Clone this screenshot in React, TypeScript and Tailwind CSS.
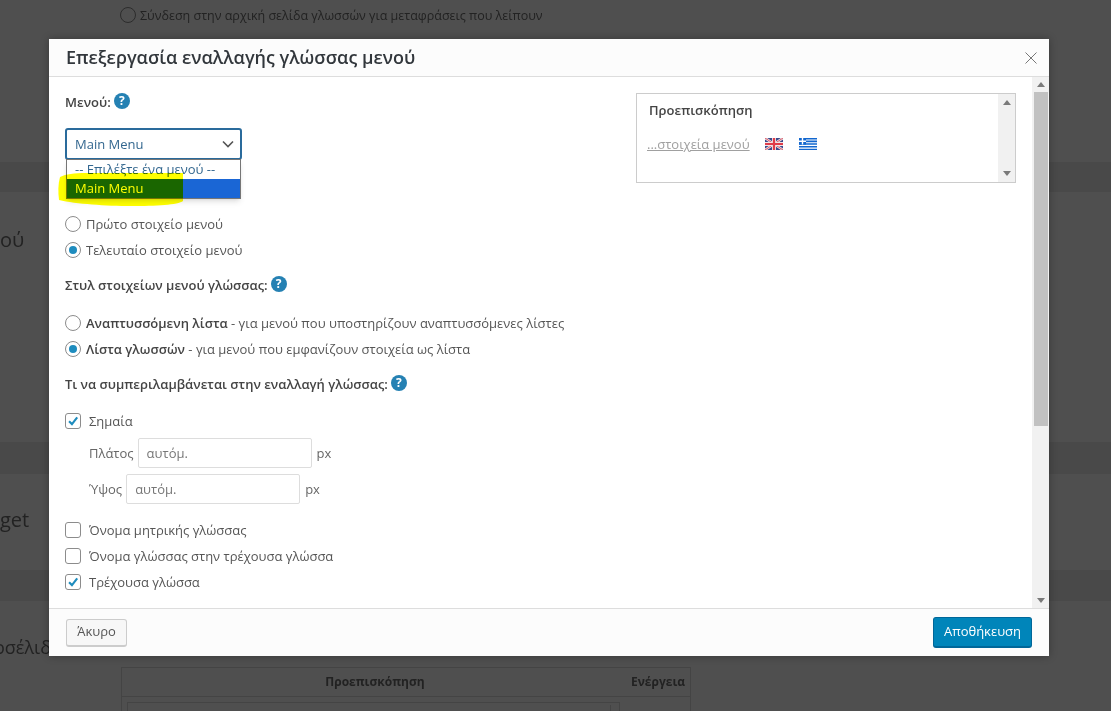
import React from "react";

const sans = { fontFamily: '"Open Sans", "Noto Sans", sans-serif' };

const HelpIcon = () => (
  <span className="inline-flex h-4 w-4 -translate-y-[2px] items-center justify-center rounded-full bg-[#2581b3] text-[12px] font-bold leading-none text-white">?</span>
);

const Radio = ({ checked }: { checked?: boolean }) => (
  <span className="flex h-4 w-4 shrink-0 items-center justify-center rounded-full border border-[#8c8c8c] bg-white">
    {checked && <span className="h-2 w-2 rounded-full bg-[#1e8cbe]" />}
  </span>
);

const Check = ({ checked }: { checked?: boolean }) => (
  <span className="flex h-4 w-4 shrink-0 items-center justify-center rounded-[3px] border border-[#8c8c8c] bg-white">
    {checked && (
      <svg viewBox="0 0 16 16" className="h-3.5 w-3.5">
        <path d="M3.5 8.2 L6.8 11.5 L12.8 3.8" fill="none" stroke="#1e8cbe" strokeWidth="2.4" />
      </svg>
    )}
  </span>
);

const RadioRow = ({ checked, children }: { checked?: boolean; children: React.ReactNode }) => (
  <div className="flex h-[26px] items-center gap-[5px] text-[13px] text-[#555]">
    <Radio checked={checked} />
    <span className="translate-y-px">{children}</span>
  </div>
);

const CheckRow = ({ checked, children }: { checked?: boolean; children: React.ReactNode }) => (
  <div className="flex h-[26px] items-center gap-[8px] text-[13px] text-[#555]">
    <Check checked={checked} />
    <span className="translate-y-px">{children}</span>
  </div>
);

const Heading = ({ children }: { children: React.ReactNode }) => (
  <div className="flex h-5 translate-y-px items-center gap-[3px] text-[13px] font-semibold text-[#444]">
    <span>{children}</span>
    <HelpIcon />
  </div>
);

const SizeRow = ({ label }: { label: string }) => (
  <div className="flex h-[30px] items-center gap-[4px] pl-[24px] text-[13px] text-[#666]">
    <span className="translate-y-px">{label}</span>
    <span className="flex h-[30px] w-[174px] items-center rounded-[2px] border border-[#ddd] bg-white px-2 pt-[1px] text-[#777]">αυτόμ.</span>
    <span className="ml-[1px] translate-y-px">px</span>
  </div>
);

const UkFlag = () => (
  <svg viewBox="0 0 18 12" className="h-3 w-[18px]">
    <rect width="18" height="12" fill="#3b4a8c" />
    <path d="M0 0 L18 12 M18 0 L0 12" stroke="#f0e4e6" strokeWidth="2.4" />
    <path d="M0 0 L18 12 M18 0 L0 12" stroke="#d9485a" strokeWidth="0.9" />
    <path d="M9 0 V12 M0 6 H18" stroke="#f0e4e6" strokeWidth="4" />
    <path d="M9 0 V12 M0 6 H18" stroke="#e03c4a" strokeWidth="2.2" />
  </svg>
);

const GreekFlag = () => (
  <svg viewBox="0 0 18 12" className="h-3 w-[18px]">
    <rect width="18" height="12" fill="#1267cf" />
    <path d="M0 2 H18 M0 4.7 H18 M0 7.4 H18 M0 10.1 H18" stroke="#fff" strokeWidth="1.1" />
    <rect width="7" height="6.6" fill="#1267cf" />
    <path d="M3.5 0 V6.6 M0 3.3 H7" stroke="#fff" strokeWidth="1.4" />
  </svg>
);

const Arrow = ({ up }: { up?: boolean }) => (
  <svg viewBox="0 0 8 5" className="h-[5px] w-2">
    <path d={up ? "M0 5 L4 0 L8 5 Z" : "M0 0 L4 5 L8 0 Z"} fill="#7a7a7a" />
  </svg>
);

export default function App() {
  return (
    <div className="relative h-[711px] w-[1111px] overflow-hidden bg-[#4f4f4f] text-[#232323]" style={sans}>
      {/* page dimmed behind the dialog */}
      <div className="flex h-full flex-col">
        <div className="flex h-[162px] items-start gap-[4px] pl-[120px] pt-[7px] text-[12.5px] text-[#222]">
          <span className="h-4 w-4 rounded-full border border-[#2c2c2c]" />
          <span>Σύνδεση στην αρχική σελίδα γλωσσών για μεταφράσεις που λείπουν</span>
        </div>
        <div className="h-[30px] bg-[#494949]" />
        <div className="h-[250px] pt-[35px] text-[20px] leading-[26px] text-[#222]">ού</div>
        <div className="h-[32px] bg-[#494949]" />
        <div className="h-[96px] pt-[33px] text-[20px] leading-[26px] text-[#222]">get</div>
        <div className="h-[31px] bg-[#494949]" />
        <div className="h-[66px] pt-[33px] text-[18px] leading-[26px] text-[#222]">
          <span className="-ml-[6px] block">οσέλιδ</span>
        </div>
        <div className="ml-[121px] flex h-[44px] w-[570px] flex-col border border-[#444] border-b-0 text-[12px] font-bold text-[#222]">
          <div className="flex h-[29px] shrink-0 items-center border-b border-[#444]">
            <div className="flex flex-1 items-center justify-center">Προεπισκόπηση</div>
            <div className="w-[62px] pl-[3px]">Ενέργεια</div>
          </div>
          <div className="ml-[5px] mt-[5px] flex h-[20px] w-[493px] justify-end border border-b-0 border-[#444] pr-[8px] pt-[2px]">
            <span className="h-[10px] w-[1px] bg-[#444]" />
          </div>
        </div>
      </div>

      {/* dialog */}
      <div className="absolute left-[49px] top-[39px] flex h-[617px] w-[1000px] flex-col bg-white shadow-[0_0_8px_rgba(0,0,0,0.3)]">
        <div className="flex h-[38px] shrink-0 items-center justify-between border-b border-[#ddd] bg-[#fcfcfc] pl-[17px] pr-[12px]">
          <span className="text-[18px] font-semibold text-[#32373c]">Επεξεργασία εναλλαγής γλώσσας μενού</span>
          <svg viewBox="0 0 12 12" className="h-3 w-3">
            <path d="M0.5 0.5 L11.5 11.5 M11.5 0.5 L0.5 11.5" stroke="#777" strokeWidth="1" fill="none" />
          </svg>
        </div>

        <div className="flex min-h-0 flex-1">
          <div className="relative flex flex-1 justify-between pl-[16px] pr-[16px]">
            <div className="flex flex-col pt-[15px]">
              <Heading>Μενού:</Heading>
              <div className="relative mt-[16px] h-[32px] w-[177px]">
                <div className="flex h-[32px] items-center justify-between rounded-[3px] border-2 border-[#2a6b9c] pl-[8px] pr-[6px] text-[13px] text-[#33678f]">
                  <span className="translate-y-px">Main Menu</span>
                  <svg viewBox="0 0 12 8" className="h-2 w-3">
                    <path d="M1 1.5 L6 6.5 L11 1.5" fill="none" stroke="#555" strokeWidth="1.6" />
                  </svg>
                </div>
                {/* open list */}
                <div className="absolute left-[1px] top-[31px] z-10 w-[175px] border border-[#767676] bg-white text-[13px] leading-[19px] shadow-md">
                  <div className="h-[19px] pl-[8px] text-[#33678f]">-- Επιλέξτε ένα μενού --</div>
                  <div className="h-[19px] bg-[#1a66d5] pl-[8px] text-white">Main Menu</div>
                </div>
              </div>
              <div className="mt-[51px] flex flex-col">
                <RadioRow>Πρώτο στοιχείο μενού</RadioRow>
                <RadioRow checked>Τελευταίο στοιχείο μενού</RadioRow>
              </div>
              <div className="mt-[12px]">
                <Heading>Στυλ στοιχείων μενού γλώσσας:</Heading>
              </div>
              <div className="mt-[15px] flex flex-col">
                <RadioRow><b className="font-semibold text-[#444]">Αναπτυσσόμενη λίστα</b> - για μενού που υποστηρίζουν αναπτυσσόμενες λίστες</RadioRow>
                <RadioRow checked><b className="font-semibold text-[#444]">Λίστα γλωσσών</b> - για μενού που εμφανίζουν στοιχεία ως λίστα</RadioRow>
              </div>
              <div className="mt-[12px]">
                <Heading>Τι να συμπεριλαμβάνεται στην εναλλαγή γλώσσας:</Heading>
              </div>
              <div className="mt-[14px]">
                <CheckRow checked>Σημαία</CheckRow>
              </div>
              <div className="mt-[4px] flex flex-col gap-[6px]">
                <SizeRow label="Πλάτος" />
                <SizeRow label="Ύψος" />
              </div>
              <div className="mt-[13px] flex flex-col">
                <CheckRow>Όνομα μητρικής γλώσσας</CheckRow>
                <CheckRow>Όνομα γλώσσας στην τρέχουσα γλώσσα</CheckRow>
                <CheckRow checked>Τρέχουσα γλώσσα</CheckRow>
              </div>
            </div>

            <div className="mt-[16px] flex h-[90px] w-[380px] border border-[#ccc]">
              <div className="flex-1 pl-[10px] pt-[7px]">
                <div className="pl-[2px] text-[13px] font-semibold text-[#444]">Προεπισκόπηση</div>
                <div className="mt-[14px] flex items-center text-[13px] text-[#a0a0a0]">
                  <span className="underline">...στοιχεία μενού</span>
                  <span className="ml-[15px]"><UkFlag /></span>
                  <span className="ml-[16px]"><GreekFlag /></span>
                </div>
              </div>
              <div className="flex w-[17px] flex-col items-center justify-between bg-[#f1f1f1] py-[6px]">
                <Arrow up />
                <Arrow />
              </div>
            </div>

            {/* marker scribble over the list */}
            <svg viewBox="0 0 130 40" className="pointer-events-none absolute left-[7px] top-[93px] z-20 h-[40px] w-[130px] mix-blend-multiply">
              <path d="M4 7 C10 4 18 3 30 3 L127 3 L127 31 C122 35 100 36 75 36 C50 36 20 34 3 30 C2 22 2 14 4 7 Z" fill="#ffff00" />
            </svg>
          </div>

          {/* dialog scrollbar */}
          <div className="flex w-[17px] shrink-0 flex-col items-center bg-[#f1f1f1]">
            <div className="flex h-[15px] items-center"><Arrow up /></div>
            <div className="h-[334px] w-[14px] bg-[#c1c1c1]" />
            <div className="flex-1" />
            <div className="flex h-[15px] items-center"><Arrow /></div>
          </div>
        </div>

        <div className="flex h-[48px] shrink-0 items-center justify-between border-t border-[#ddd] bg-[#fcfcfc] pl-[17px] pr-[17px]">
          <span className="flex h-[28px] w-[61px] items-center justify-center rounded-[3px] border border-[#ccc] border-b-2 bg-[#f7f7f7] text-[13px] text-[#555]">Άκυρο</span>
          <span className="flex h-[31px] w-[99px] items-center justify-center rounded-[3px] border border-[#006799] border-b-2 bg-[#0085ba] text-[13px] text-white">Αποθήκευση</span>
        </div>
      </div>
    </div>
  );
}
